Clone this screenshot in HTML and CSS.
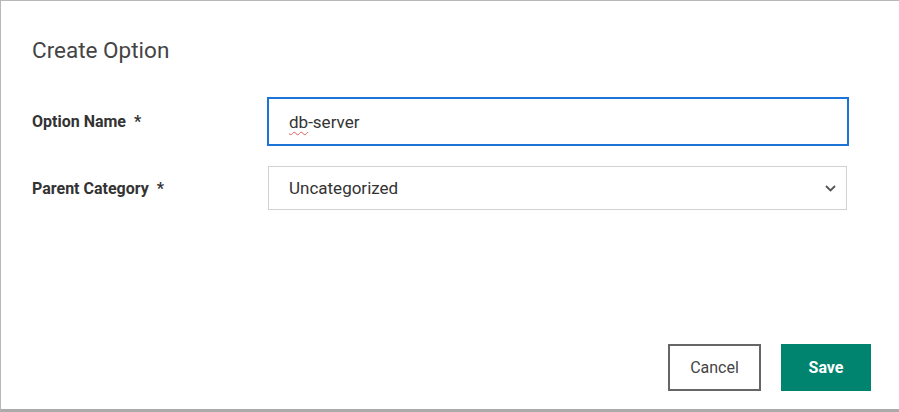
FILE: index.html
```html
<!DOCTYPE html>
<html lang="en">
<head>
<meta charset="utf-8">
<title>Create Option</title>
<link rel="stylesheet" href="styles.css">
</head>
<body>
<div class="modal">
  <h1 class="title">Create Option</h1>
  <div class="form">
    <div class="label">Option Name <span class="req">*</span></div>
    <div class="field field-input" role="textbox"><span class="typo">db</span>-server</div>
    <div class="label">Parent Category <span class="req">*</span></div>
    <div class="field field-select" role="combobox">
      <span>Uncategorized</span>
      <svg class="chev" width="11" height="7" viewBox="0 0 11 7"><path d="M1 1 L5.5 5.5 L10 1" fill="none" stroke="#555" stroke-width="1.8"/></svg>
    </div>
  </div>
  <div class="actions">
    <button class="btn btn-cancel">Cancel</button>
    <button class="btn btn-save">Save</button>
  </div>
</div>
</body>
</html>
```
FILE: styles.css
```css
html, body {
  margin: 0;
  padding: 0;
  background: #fff;
}
body {
  width: 899px;
  height: 412px;
  overflow: hidden;
  font-family: Roboto, "Liberation Sans", sans-serif;
}
.modal {
  box-sizing: border-box;
  height: 412px;
  border-top: 1px solid #b8b8b8;
  border-left: 1px solid #b8b8b8;
  border-bottom: 3px solid #ababab;
  padding: 36px 28px 18px 31px;
  display: flex;
  flex-direction: column;
}
.title {
  margin: 0;
  font-size: 22.5px;
  line-height: 26px;
  font-weight: 400;
  color: #444;
}
.form {
  margin-top: 34px;
  display: grid;
  grid-template-columns: 235px 582px;
  row-gap: 20px;
  align-items: center;
}
.label {
  font-size: 16px;
  font-weight: 700;
  color: #333;
}
.req {
  margin-left: 4px;
}
.field {
  box-sizing: border-box;
  font-size: 17px;
  color: #333;
  display: flex;
  align-items: center;
  background: #fff;
}
.field-input {
  width: 582px;
  height: 49px;
  border: 2px solid #1e74d6;
  padding-left: 20px;
}
.typo {
  text-decoration: underline wavy #e05a5a;
  text-decoration-thickness: 1px;
  text-underline-offset: 3px;
}
.field-select {
  width: 579px;
  height: 44px;
  margin-left: 1px;
  border: 1px solid #d2d2d2;
  padding: 0 10px 0 20px;
  justify-content: space-between;
}
.chev {
  display: block;
}
.actions {
  margin-top: auto;
  display: flex;
  justify-content: flex-end;
  gap: 20px;
}
.btn {
  box-sizing: border-box;
  height: 47px;
  font-family: Roboto, "Liberation Sans", sans-serif;
  font-size: 16px;
  cursor: pointer;
}
.btn-cancel {
  width: 93px;
  background: #fff;
  border: 2px solid #666;
  color: #444;
  font-weight: 400;
}
.btn-save {
  width: 90px;
  background: #00846f;
  border: none;
  color: #fff;
  font-weight: 700;
}
```
